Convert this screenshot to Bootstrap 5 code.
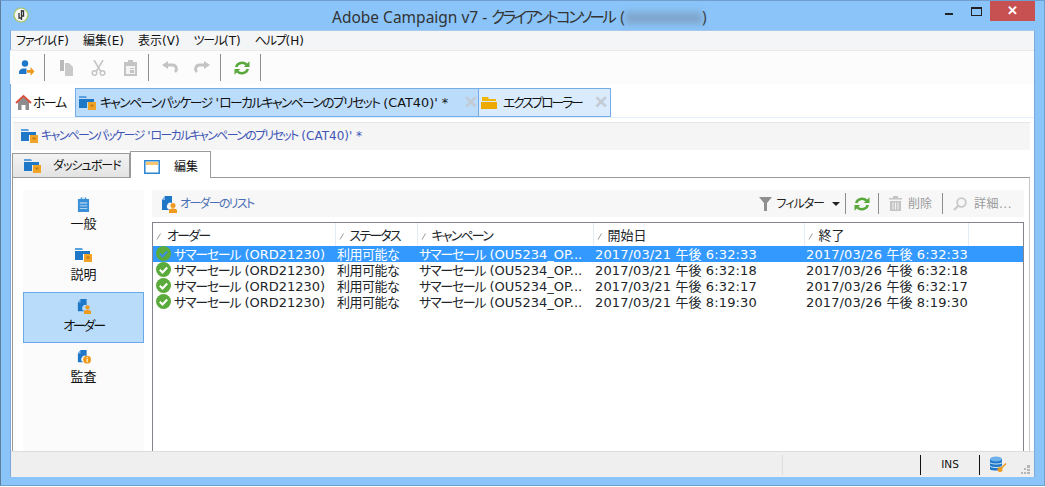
<!DOCTYPE html>
<html lang="ja">
<head>
<meta charset="UTF-8">
<title>Adobe Campaign v7</title>
<link href="https://cdn.jsdelivr.net/npm/bootstrap@5.3.0/dist/css/bootstrap.min.css" rel="stylesheet">
<style>
body { background: #fff; font-family: "DejaVu Sans", "Noto Sans CJK JP", sans-serif; font-size: 12px; color: #111; overflow: hidden; font-feature-settings: "palt"; }
svg { display: block; flex: none; }
.kf { letter-spacing: -1.6px; }
.app-win { width: 1045px; height: 486px; background: #8ac4f9; border: 1px solid #6f9fcf; border-left-color: #5f7f9f; padding: 0 9px 8px 9px; }
.title-bar { height: 29px; margin: 0 -9px; padding-left: 12px; position: relative; }
.app-logo { margin-top: 6px; }
.title-text { position: absolute; left: 331px; top: 6px; font-family: "Noto Sans", "Noto Sans CJK JP", sans-serif; font-size: 15.5px; line-height: 20px; color: #333; white-space: nowrap; }
.title-text .kf { letter-spacing: -2.6px; margin-right: 2px; }
.blur-bit { display: inline-block; width: 77px; height: 12px; background: #7fa6cc; filter: blur(3px); vertical-align: -1px; }
.win-btns { margin-left: auto; }
.win-min { width: 8px; height: 2px; background: #222; margin: 12px 18px 0 0; }
.win-max { width: 11px; height: 9px; border: 1px solid #222; border-top-width: 2px; margin: 6px 8px 0 0; }
.win-close { width: 45px; height: 20px; background: #c75050; color: #fff; font: bold 13px/19px "Liberation Sans", sans-serif; text-align: center; margin-right: 9px; }
.client-area { height: 447px; background: #fff; border: 1px solid #7aaadb; border-top-color: #a6c8ea; border-bottom: 0; }
.menu-strip { height: 19px; background: #f4f5f7; padding-left: 5px; gap: 14px; line-height: 20px; }
.menu-strip .kf { letter-spacing: -1.2px; }
.tool-strip { height: 34px; background: #fcfcfc; border-top: 1px solid #e9e9e9; margin-left: -1px; }
.tool-btn { width: 32px; height: 33px; }
.tool-sep { width: 1px; height: 27px; background: #8d8d8d; margin: 0 5px 0 2px; }
.doc-tabs { height: 34px; padding: 4px 0 0 1px; border-bottom: 1px solid #e3effb; font-size: 12.8px; }
.doc-tab { height: 29px; gap: 4px; white-space: nowrap; }
.tab-home { width: 63px; padding-left: 3px; gap: 1px; }
.tab-home .kf { letter-spacing: -1.2px; }
.tab-pack { width: 404px; padding: 0 0 0 3px; background: #bbdcfb; border: 1px solid #74ade6; }
.tab-expl { width: 132px; padding: 0 2px 0 2px; background: #d9ebfd; border: 1px solid #74ade6; border-left: 0; gap: 6px; }
.tab-expl .kf { letter-spacing: -2.1px; }
.tab-x { margin-left: auto; color: #c3cad2; font: bold 17px/1 "Liberation Sans", sans-serif; }
.crumb-bar { height: 28px; margin: 4px 4px 0 2px; padding: 0 0 1px 8px; background: #f5f5f5; border-top: 1px solid #e6e6e6; color: #3f55b5; gap: 3px; white-space: nowrap; }
.crumb-bar .kf { letter-spacing: -1.7px; }
.edit-tabs { height: 28px; margin: 0 4px 0 1px; align-items: flex-end; border-bottom: 1px solid #9a9a9a; white-space: nowrap; }
.edit-tab { height: 24px; width: 118px; border: 1px solid #9a9a9a; border-bottom: 0; background: linear-gradient(#f3f3f3, #e3e3e3); padding: 1px 0 0 11px; gap: 12px; }
.edit-tab .kf { letter-spacing: -1px; }
.edit-tab-on { height: 27px; width: 81px; margin-bottom: -1px; background: #fff; padding: 4px 0 0 13px; gap: 14px; border: 1px solid #9a9a9a; border-bottom: 0; }
.edit-body { height: 273px; margin-right: 4px; margin-left: 1px; border-left: 1px solid #9a9a9a; border-right: 1px solid #c9c9c9; padding: 12px 5px 0 10px; gap: 8px; }
.side-nav { width: 121px; background: #fbfbfb; }
.side-item { height: 51px; padding-top: 5px; font-size: 13px; line-height: 18px; border: 1px solid transparent; }
.side-item span { margin-top: 3px; }
.side-item .kf { letter-spacing: -2.2px; }
.side-on { background: #b9dcfb; border-color: #6aa9e9; }
.list-pane { width: 872px; }
.list-bar { height: 27px; background: #f7f7f7; padding-left: 9px; white-space: nowrap; }
.list-name { color: #4a6fb5; margin-left: 3px; letter-spacing: -1.7px; }
.bar-tools { margin-left: auto; height: 27px; color: #222; padding-right: 12px; }
.bar-tools .kf { letter-spacing: -1px; }
.bar-sep { width: 1px; height: 21px; background: #8d8d8d; }
.caret-gap { margin: 0 5px 0 8px; }
.trash-gap { margin: 0 6px 0 10px; }
.del-gap { margin-right: 10px; }
.lens-gap { margin: 0 7px 0 10px; }
.dim-text { color: #9a9a9a; }
.dots-text { letter-spacing: .5px; }
.grid-box { height: 229px; margin-top: 5px; border: 1px solid #85858d; border-bottom: 0; background: #fff; }
.order-table { table-layout: fixed; width: 100%; margin: 0; font-size: 13px; border-collapse: collapse; }
.order-table th, .order-table td { padding: 0 0 0 2px; border: 0; white-space: nowrap; overflow: hidden; background: transparent; color: inherit; }
.order-table th { height: 23px; font-weight: 400; padding: 0 0 0 3px; border-right: 1px solid #e3ecf7; line-height: 20px; }
.order-table th:last-child { border-right: 0; }
.order-table td { height: 16px; line-height: 14px; padding-top: 2px; }
.order-table td:first-child { padding-left: 3px; }
.order-table tr.row-on { background: #3399ff; color: #fff; }
.order-table .kf { letter-spacing: -1.3px; }
.order-table th .kf { letter-spacing: -1.8px; }
.order-table .status-kf { letter-spacing: -.5px; }
.order-table .date-cell { letter-spacing: .12px; }
.w-a { width: 182px; } .w-b { width: 82px; } .w-c { width: 176px; } .w-d { width: 211px; } .w-e { width: 164px; }
.head-cell { gap: 5px; }
.check-cell { gap: 3px; height: 14px; }
.check-cell svg { margin-top: -3px; }
.status-bar { height: 26px; background: #efefef; border-top: 1px solid #dcdcdc; font-size: 10.5px; }
.stat-sep { width: 1px; height: 20px; background: #111; }
.stat-faint { width: 1px; height: 20px; background: #dedede; margin: 0 137px 0 771px; }
.stat-ins { width: 58px; }
.db-gap { margin-left: 10px; }
.grip-dots { width: 9px; height: 9px; margin: 9px 4px 0 auto; }
</style>
</head>
<body>

<svg width="0" height="0" class="position-absolute">
  <defs>
    <symbol id="i-pack" viewBox="0 0 17 16">
      <path fill="#5aa0dc" d="M0 1h7l1 2H0z"/>
      <path fill="#1f77c8" d="M0 4h15v3H8v6H0z"/>
      <path fill="#f0a326" d="M9 7h8v8H9z"/>
      <path fill="#c27c10" d="M11.500 9.500h3v2h-3z"/>
    </symbol>
    <symbol id="i-order" viewBox="0 0 16 18">
      <path fill="#1f77c8" d="M4 1h7v7a3.500 3.500 0 0 0-3 6.500V15H1V5z"/>
      <path fill="#7fb3e4" d="M4 1v4H1z"/>
      <circle cx="12" cy="10.500" r="2.500" fill="#ee9a1c"/>
      <path fill="#ee9a1c" d="M8 18v-3c1-2 7-2 8 0v3z"/>
    </symbol>
    <symbol id="i-audit" viewBox="0 0 16 18">
      <path fill="#1f77c8" d="M4 1h7v7a4 4 0 0 0-4 7H1V5z"/>
      <path fill="#7fb3e4" d="M4 1v4H1z"/>
      <circle cx="11.500" cy="12" r="4.500" fill="#ee9a1c"/>
      <path fill="#fff" d="M11 9h1.200v1.200H11zM11 11h1.200v4H11z"/>
    </symbol>
    <symbol id="i-clip" viewBox="0 0 14 17">
      <path fill="#3a8fd9" d="M1 3h3V1.500h6V3h3v14H1z"/>
      <path fill="#d8e9f8" d="M5.500 1h3v2h-3zM3 7h8v1H3zM3 10h8v1H3zM3 13h8v1H3z"/>
    </symbol>
    <symbol id="i-win" viewBox="0 0 16 14">
      <path fill="none" stroke="#2a84d2" stroke-width="1.500" d="M.8.800h14.400v12.400H.8z"/>
      <path fill="#f5c66d" d="M2 2h12v3H2z"/>
    </symbol>
    <symbol id="i-home" viewBox="0 0 17 17">
      <path fill="#8d8d8d" d="M3 8l5.500-5L14 8v8h-3.500v-5h-4v5H3z"/>
      <path fill="none" stroke="#d9503f" stroke-width="2" d="M1 9l7.500-7L16 9"/>
    </symbol>
    <symbol id="i-folder" viewBox="0 0 16 14">
      <path fill="#f2b705" d="M1 1h6l1 2h7v2H1z"/>
      <path fill="#eda900" d="M0 6h16v7H0z"/>
    </symbol>
    <symbol id="i-sync" viewBox="0 0 16 16">
      <path fill="none" stroke="#58a83b" stroke-width="2.600" d="M2.200 7a6 5.500 0 0 1 10.400-2.300M13.800 9a6 5.500 0 0 1-10.400 2.300"/>
      <path fill="#58a83b" d="M15.500 1.200V7H9.800zM.5 14.800V9h5.700z"/>
    </symbol>
    <symbol id="i-check" viewBox="0 0 15 15">
      <circle cx="7.500" cy="7.500" r="7.500" fill="#5bab3c"/>
      <path fill="none" stroke="#fff" stroke-width="2" d="M3.800 7.800l2.700 2.700 4.700-5"/>
    </symbol>
    <symbol id="i-check-on" viewBox="0 0 15 15">
      <circle cx="7.500" cy="7.500" r="7.500" fill="#5bab3c"/>
      <path fill="none" stroke="#3a8ee8" stroke-width="2" d="M3.800 7.800l2.700 2.700 4.700-5"/>
    </symbol>
    <symbol id="i-sort" viewBox="0 0 6 7">
      <path fill="none" stroke="#9a9a9a" d="M1 6.500l3.500-6"/>
    </symbol>
    <symbol id="i-user-go" viewBox="0 0 17 17">
      <circle cx="7" cy="4.500" r="3.200" fill="#1f77c8"/>
      <path fill="#1f77c8" d="M1 15v-2c0-2 2.500-3.500 4-3.500h3.500V15z"/>
      <path fill="#ee9a1c" d="M9 11h3.500V8l4 4.500-4 4.300v-3H9z"/>
    </symbol>
    <symbol id="i-copy" viewBox="0 0 15 16">
      <path fill="#b9b9b9" d="M1 0h4v11H1z"/>
      <path fill="#c9c9c9" d="M6 3h4l4 4v9H6z"/>
    </symbol>
    <symbol id="i-cut" viewBox="0 0 15 16">
      <path fill="none" stroke="#c4c4c4" stroke-width="1.500" d="M3 0l6.500 11M12 0L5.500 11"/>
      <circle cx="3.500" cy="13" r="2.300" fill="none" stroke="#c4c4c4" stroke-width="1.500"/>
      <circle cx="11.500" cy="13" r="2.300" fill="none" stroke="#c4c4c4" stroke-width="1.500"/>
    </symbol>
    <symbol id="i-paste" viewBox="0 0 13 16">
      <path fill="#c4c4c4" d="M0 2h4V0h5v2h4v14H0z"/>
      <path fill="#f4f4f4" d="M2 6h9v8H2z"/>
      <path fill="#c4c4c4" d="M6 8h4v1H6zM6 10h4v3H6z"/>
    </symbol>
    <symbol id="i-undo" viewBox="0 0 16 13">
      <path fill="none" stroke="#c4c4c4" stroke-width="2.800" d="M4 4h6a4 4 0 0 1 3 7"/>
      <path fill="#c4c4c4" d="M6 0v8L0 4z"/>
    </symbol>
    <symbol id="i-redo" viewBox="0 0 16 13">
      <path fill="none" stroke="#c4c4c4" stroke-width="2.800" d="M12 4H6a4 4 0 0 0-3 7"/>
      <path fill="#c4c4c4" d="M10 0v8l6-4z"/>
    </symbol>
    <symbol id="i-funnel" viewBox="0 0 13 14">
      <path fill="#8f8f8f" d="M0 0h13L8 6v8H5V6z"/>
    </symbol>
    <symbol id="i-trash" viewBox="0 0 13 15">
      <path fill="#c4c4c4" d="M0 2h4V0h5v2h4v1.500H0zM1 5h11v10H1z"/>
      <path fill="#f4f4f4" d="M3.500 6.500h1v7h-1zM6 6.500h1v7H6zM8.500 6.500h1v7h-1z"/>
    </symbol>
    <symbol id="i-lens" viewBox="0 0 14 14">
      <circle cx="8.500" cy="5.500" r="4.300" fill="none" stroke="#c9c9c9" stroke-width="1.800"/>
      <path stroke="#c9c9c9" stroke-width="2.200" d="M5.500 8.500L1 13"/>
    </symbol>
    <symbol id="i-db" viewBox="0 0 17 17">
      <path fill="#1f77c8" d="M0 3v10c0 2 12 2 12 0V3z"/>
      <ellipse cx="6" cy="3" rx="6" ry="2.500" fill="#6db0ea"/>
      <path fill="none" stroke="#cfe4f7" d="M0 6.500c1 2 11 2 12 0M0 10c1 2 11 2 12 0"/>
      <circle cx="10" cy="13.500" r="2.500" fill="#ee9a1c"/>
      <path stroke="#ee9a1c" stroke-width="1.600" d="M11.500 12L16 7.500"/>
    </symbol>
  </defs>
</svg>

<div class="app-win d-flex flex-column">
  <div class="title-bar d-flex">
    <svg class="app-logo" width="16" height="16" viewBox="0 0 16 16">
      <circle cx="8" cy="8" r="7" fill="#f4f4f4" stroke="#a4c45c" stroke-width="1.200"/>
      <path fill="none" stroke="#333" stroke-width="1.300" d="M8.500 3v10M8.500 4h2v5h-2M6 6v5h2.500"/>
    </svg>
    <div class="title-text">Adobe Campaign v7 - <span class="kf">クライアントコンソール</span> (<span class="blur-bit"></span>)</div>
    <div class="win-btns d-flex">
      <div class="win-min"></div>
      <div class="win-max"></div>
      <div class="win-close">✕</div>
    </div>
  </div>

  <div class="client-area d-flex flex-column">
    <div class="menu-strip d-flex">
      <span><span class="kf">ファイル</span>(F)</span><span>編集(E)</span><span>表示(V)</span><span><span class="kf">ツール</span>(T)</span><span><span class="kf">ヘルプ</span>(H)</span>
    </div>

    <div class="tool-strip d-flex align-items-center">
      <div class="tool-btn d-flex align-items-center justify-content-center"><svg width="17" height="17"><use href="#i-user-go"/></svg></div>
      <div class="tool-sep"></div>
      <div class="tool-btn d-flex align-items-center justify-content-center"><svg width="15" height="16"><use href="#i-copy"/></svg></div>
      <div class="tool-btn d-flex align-items-center justify-content-center"><svg width="15" height="16"><use href="#i-cut"/></svg></div>
      <div class="tool-btn d-flex align-items-center justify-content-center"><svg width="13" height="16"><use href="#i-paste"/></svg></div>
      <div class="tool-sep"></div>
      <div class="tool-btn d-flex align-items-center justify-content-center"><svg width="16" height="13"><use href="#i-undo"/></svg></div>
      <div class="tool-btn d-flex align-items-center justify-content-center"><svg width="16" height="13"><use href="#i-redo"/></svg></div>
      <div class="tool-sep"></div>
      <div class="tool-btn d-flex align-items-center justify-content-center"><svg width="16" height="16"><use href="#i-sync"/></svg></div>
      <div class="tool-sep"></div>
    </div>

    <div class="doc-tabs d-flex">
      <div class="doc-tab tab-home d-flex align-items-center"><svg width="17" height="17"><use href="#i-home"/></svg><span class="kf">ホーム</span></div>
      <div class="doc-tab tab-pack d-flex align-items-center"><svg width="17" height="16"><use href="#i-pack"/></svg><span><span class="kf">キャンペーンパッケージ</span> '<span class="kf">ローカルキャンペーンのプリセット</span> (CAT40)' *</span><span class="tab-x">✕</span></div>
      <div class="doc-tab tab-expl d-flex align-items-center"><svg width="16" height="14"><use href="#i-folder"/></svg><span class="kf">エクスプローラー</span><span class="tab-x">✕</span></div>
    </div>

    <div class="crumb-bar d-flex align-items-center"><svg width="17" height="16"><use href="#i-pack"/></svg><span><span class="kf">キャンペーンパッケージ</span> '<span class="kf">ローカルキャンペーンのプリセット</span> (CAT40)' *</span></div>

    <div class="edit-tabs d-flex">
      <div class="edit-tab d-flex align-items-center"><svg width="17" height="16"><use href="#i-pack"/></svg><span class="kf">ダッシュボード</span></div>
      <div class="edit-tab-on d-flex align-items-center"><svg width="16" height="14"><use href="#i-win"/></svg><span>編集</span></div>
    </div>

    <div class="edit-body d-flex">
      <div class="side-nav">
        <div class="side-item d-flex flex-column align-items-center"><svg width="13" height="16"><use href="#i-clip"/></svg><span>一般</span></div>
        <div class="side-item d-flex flex-column align-items-center"><svg width="17" height="16"><use href="#i-pack"/></svg><span>説明</span></div>
        <div class="side-item side-on d-flex flex-column align-items-center"><svg width="14" height="16"><use href="#i-order"/></svg><span class="kf">オーダー</span></div>
        <div class="side-item d-flex flex-column align-items-center"><svg width="14" height="16"><use href="#i-audit"/></svg><span>監査</span></div>
      </div>

      <div class="list-pane">
        <div class="list-bar d-flex align-items-center">
          <svg width="16" height="18"><use href="#i-order"/></svg><span class="list-name">オーダーのリスト</span>
          <div class="bar-tools d-flex align-items-center">
            <svg width="13" height="14"><use href="#i-funnel"/></svg><span class="ms-1 kf">フィルター</span>
            <svg class="caret-gap" width="8" height="4" viewBox="0 0 8 4"><path fill="#222" d="M0 0h8L4 4z"/></svg>
            <div class="bar-sep"></div>
            <svg class="mx-2" width="16" height="16"><use href="#i-sync"/></svg>
            <div class="bar-sep"></div>
            <svg class="trash-gap" width="13" height="15"><use href="#i-trash"/></svg><span class="dim-text del-gap">削除</span>
            <div class="bar-sep"></div>
            <svg class="lens-gap" width="14" height="14"><use href="#i-lens"/></svg><span class="dim-text dots-text">詳細...</span>
          </div>
        </div>

        <div class="grid-box">
          <table class="table order-table">
            <colgroup><col class="w-a"><col class="w-b"><col class="w-c"><col class="w-d"><col class="w-e"><col></colgroup>
            <thead>
              <tr id="head-row"></tr>
            </thead>
            <tbody id="order-rows"></tbody>
          </table>
        </div>
      </div>
    </div>

    <div class="status-bar d-flex align-items-center">
      <div class="stat-faint"></div>
      <div class="stat-sep"></div>
      <div class="stat-ins text-center">INS</div>
      <div class="stat-sep"></div>
      <svg class="db-gap" width="17" height="17"><use href="#i-db"/></svg>
      <svg class="grip-dots" viewBox="0 0 9 9"><path fill="#b5b5b5" d="M6 0h3v3H6zM3 3h2v2H3zM6 4h3v2H6zM0 7h2v2H0zM3 7h2v2H3zM6 7h3v2H6z"/></svg>
    </div>
  </div>
</div>

<script>
  // grid content
  const heads = ['<span class="kf">オーダー</span>', '<span class="kf">ステータス</span>', '<span class="kf">キャンペーン</span>', '開始日', '終了'];
  document.getElementById('head-row').innerHTML = heads.map(h =>
    `<th><div class="head-cell d-flex align-items-center"><svg width="6" height="7"><use href="#i-sort"/></svg><span>${h}</span></div></th>`
  ).join('') + '<th></th>';

  const rows = [
    ['2017/03/21 午後 6:32:33', '2017/03/26 午後 6:32:33'],
    ['2017/03/21 午後 6:32:18', '2017/03/26 午後 6:32:18'],
    ['2017/03/21 午後 6:32:17', '2017/03/26 午後 6:32:17'],
    ['2017/03/21 午後 8:19:30', '2017/03/26 午後 8:19:30']
  ];
  document.getElementById('order-rows').innerHTML = rows.map((r, i) => `
    <tr class="${i === 0 ? 'row-on' : ''}">
      <td><div class="check-cell d-flex align-items-center"><svg width="15" height="15"><use href="#${i === 0 ? 'i-check-on' : 'i-check'}"/></svg><span><span class="kf">サマーセール</span> (ORD21230)</span></div></td>
      <td><span class="status-kf">利用可能な</span></td>
      <td><span class="kf">サマーセール</span> (OU5234_OP...</td>
      <td class="date-cell">${r[0]}</td>
      <td class="date-cell">${r[1]}</td>
      <td></td>
    </tr>`).join('');
</script>
<script src="https://cdn.jsdelivr.net/npm/bootstrap@5.3.0/dist/js/bootstrap.bundle.min.js"></script>
</body>
</html>
